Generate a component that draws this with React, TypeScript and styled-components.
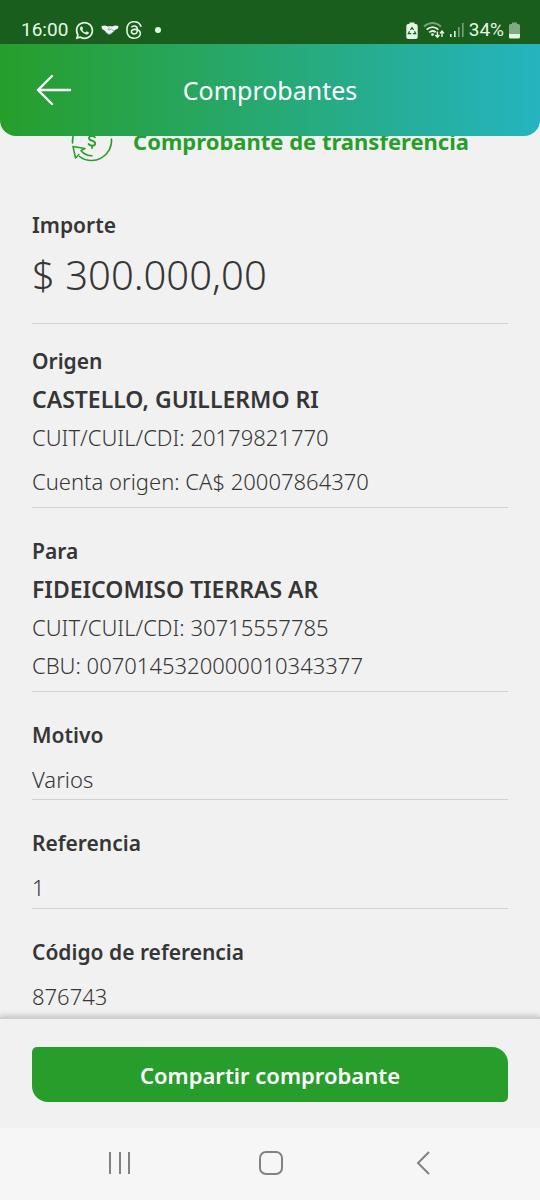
import React from "react";
import styled, { createGlobalStyle } from "styled-components";
import { RiWhatsappLine } from "react-icons/ri";
import { BsThreads } from "react-icons/bs";

const Global = createGlobalStyle`
  * { box-sizing: border-box; }
  body {
    margin: 0;
    background: #f1f1f1;
    color: #363636;
    font-family: "Noto Sans", "Open Sans", sans-serif;
  }
`;

const Screen = styled.div`
  display: flex;
  flex-direction: column;
  min-height: 100vh;
`;

const StatusBar = styled.div`
  display: flex;
  justify-content: space-between;
  align-items: center;
  height: 44px;
  padding: 16px 20px 0 21px;
  background: #195e1d;
  color: #e6f8e4;
  font: 400 19px/28px Roboto, sans-serif;
`;

const StatusGroup = styled.div<{ $gap: number }>`
  display: flex;
  align-items: center;
  gap: ${(p) => p.$gap}px;
`;

const Dot = styled.span`
  width: 6px;
  height: 6px;
  margin-left: 6px;
  border-radius: 50%;
  background: currentColor;
`;

const Header = styled.header`
  position: relative;
  z-index: 1;
  display: grid;
  grid-template-columns: 44px 1fr 44px;
  align-items: center;
  height: 92px;
  padding: 0 32px;
  border-radius: 0 0 16px 16px;
  background: linear-gradient(90deg, #279e2b, #27a973 50%, #25b4c0);
  color: #fff;
`;

const IconButton = styled.button`
  display: flex;
  align-items: center;
  justify-content: center;
  width: 44px;
  height: 44px;
  padding: 0;
  border: 0;
  background: none;
  color: inherit;
  cursor: pointer;
`;

const HeaderTitle = styled.h1`
  margin: 0;
  font-size: 25px;
  font-weight: 400;
  line-height: 36px;
  text-align: center;
`;

const Content = styled.main`
  flex: 1;
  margin-top: -16px;
  padding: 0 32px;
`;

const TitleRow = styled.div`
  display: flex;
  justify-content: center;
  align-items: center;
  gap: 20px;
  height: 42px;
  color: #279e2b;
`;

const Title = styled.h2`
  margin: 0;
  font-size: 22px;
  font-weight: 700;
  line-height: 32px;
`;

const Section = styled.section<{ $top: number; $bottom: number; $last?: boolean }>`
  padding: ${(p) => p.$top}px 0 ${(p) => p.$bottom}px;
  border-bottom: ${(p) => (p.$last ? 0 : 1)}px solid #d2d2d2;
`;

const Label = styled.h3`
  margin: 0;
  font-size: 21px;
  font-weight: 600;
  line-height: 38px;
`;

const Name = styled.p`
  margin: 0;
  font-size: 23px;
  font-weight: 600;
  line-height: 38px;
`;

const Line = styled.p<{ $spaced?: boolean }>`
  margin: ${(p) => (p.$spaced ? 6 : 0)}px 0 0;
  font-size: 22px;
  font-weight: 300;
  line-height: 38px;
`;

const Amount = styled.p`
  margin: 3px 0 0;
  font-size: 40px;
  font-weight: 300;
  line-height: 56px;
`;

const Footer = styled.footer`
  padding: 28px 32px 26px;
  border-top: 2px solid #cfcfcf;
  box-shadow: 0 -2px 5px rgba(0, 0, 0, 0.16);
`;

const ShareButton = styled.button`
  display: block;
  width: 100%;
  height: 55px;
  padding: 0;
  border: 0;
  border-radius: 5px 16px 5px 16px;
  background: #279e2b;
  color: #fff;
  font: 600 22px/36px "Noto Sans", "Open Sans", sans-serif;
  cursor: pointer;
`;

const NavBar = styled.nav`
  display: flex;
  justify-content: space-between;
  align-items: center;
  height: 72px;
  padding: 0 95px 2px 97px;
  background: #f6f6f6;
  color: #828282;
`;

const HandshakeIcon = () => (
  <svg width="18" height="10" viewBox="0 0 18 10">
    <path d="M0.500 1 4 0.500 7 1.500 9 1l2 .500 3-1L17.500 1 17 3.500l-3 1.500-3.500 3.500L8.500 9.500 6 8.500 3.500 5.500 1 4z" fill="#f2f4fa" />
    <path d="M9 2 7 4.500l2 .500 1.500-1 3 2.500M3.500 5.500 6 8.500 8.500 9.500l3-2" fill="none" stroke="#7e8f9c" strokeWidth=".8" />
  </svg>
);

const RecyclingBattery = () => (
  <svg width="12" height="17" viewBox="0 0 12 17">
    <path d="M3.5 0.5h5v1.5h1.2a2 2 0 0 1 2 2V15a2 2 0 0 1-2 2H2.3a2 2 0 0 1-2-2V4a2 2 0 0 1 2-2h1.2z" fill="currentColor" />
    <path d="M4.4 8 6 5.600 7.600 8M8.500 9.300 9.600 11.700H7M5.300 11.700H2.400L3.500 9.300" fill="none" stroke="#195e1d" strokeWidth="1.200" />
  </svg>
);

const WifiIcon = () => (
  <svg width="22" height="18" viewBox="0 0 22 18" fill="none" stroke="currentColor" strokeWidth="1.8">
    <path d="M1 5.500Q9.500-1.500 18 5.500" opacity=".45" />
    <path d="M3.600 8.600Q9.500 3.600 15.400 8.600" />
    <path d="M6.200 11.400Q9.500 8.700 12.600 11.200" />
    <circle cx="9.500" cy="13.600" r="1.400" fill="currentColor" stroke="none" />
    <path d="M14.400 10.500v5.500M12.400 14l2 2.300 2-2.300M19 16v-5.700M17 12.400l2-2.300 2 2.300" strokeWidth="1.400" />
  </svg>
);

const SignalIcon = () => (
  <svg width="14" height="16" viewBox="0 0 14 16" fill="currentColor">
    <rect x="0" y="12" width="1.600" height="3" />
    <rect x="4" y="9" width="1.600" height="6" />
    <rect x="8" y="5" width="1.600" height="10" opacity=".45" />
    <rect x="12" y="1" width="1.600" height="14" opacity=".45" />
  </svg>
);

const BatteryIcon = () => (
  <svg width="11" height="17" viewBox="0 0 11 17" fill="currentColor">
    <path d="M3 0.500h5V2h1.500A1.500 1.500 0 0 1 11 3.500V12H0V3.500A1.500 1.500 0 0 1 1.500 2H3z" opacity=".5" />
    <path d="M0 12h11v3a1.500 1.500 0 0 1-1.500 1.500h-8A1.500 1.500 0 0 1 0 15z" />
  </svg>
);

const BackArrow = () => (
  <svg width="36" height="32" viewBox="0 0 36 32" fill="none" stroke="currentColor" strokeWidth="2.400" strokeLinecap="round" strokeLinejoin="round">
    <path d="M34 16H2M16 2 2 16l14 14" />
  </svg>
);

const TransferIcon = () => (
  <svg width="42" height="42" viewBox="0 0 42 42" fill="none" stroke="currentColor" strokeWidth="1.500" strokeLinejoin="round" strokeLinecap="round">
    <path d="M40.500 19a20 20 0 0 1-32 17.500" />
    <path d="M1.500 23a20 20 0 0 1 32-17.500" />
    <path d="M8 34.500 4.500 38 2 26.500l12 2-4 2.200c3 3.400 6.500 5 11 5.100" />
    <path d="M34 7.500 37.500 4l2.500 11.500-12-2 4-2.200c-3-3.400-6.500-5-11-5.100" />
    <path d="M24 17.300c-.8-1.500-6-2-6 .9 0 3 6.200 2 6.200 5.200 0 3-5.600 2.700-6.600.6M21 13.400v2.400M21 26v2" strokeWidth="1.800" />
  </svg>
);

const App: React.FC = () => (
  <>
    <Global />
    <Screen>
      <StatusBar>
        <StatusGroup $gap={6}>
          <span>16:00</span>
          <RiWhatsappLine size={21} />
          <HandshakeIcon />
          <BsThreads size={18} />
          <Dot />
        </StatusGroup>
        <StatusGroup $gap={5}>
          <RecyclingBattery />
          <StatusGroup $gap={5}>
            <WifiIcon />
            <SignalIcon />
          </StatusGroup>
          <span>34%</span>
          <BatteryIcon />
        </StatusGroup>
      </StatusBar>

      <Header>
        <IconButton aria-label="Volver">
          <BackArrow />
        </IconButton>
        <HeaderTitle>Comprobantes</HeaderTitle>
      </Header>

      <Content>
        <TitleRow>
          <TransferIcon />
          <Title>Comprobante de transferencia</Title>
        </TitleRow>

        <Section $top={44} $bottom={20}>
          <Label>Importe</Label>
          <Amount>$ 300.000,00</Amount>
        </Section>

        <Section $top={18} $bottom={7}>
          <Label>Origen</Label>
          <Name>CASTELLO, GUILLERMO RI</Name>
          <Line>CUIT/CUIL/CDI: 20179821770</Line>
          <Line $spaced>Cuenta origen: CA$ 20007864370</Line>
        </Section>

        <Section $top={24} $bottom={7}>
          <Label>Para</Label>
          <Name>FIDEICOMISO TIERRAS AR</Name>
          <Line>CUIT/CUIL/CDI: 30715557785</Line>
          <Line>CBU: 0070145320000010343377</Line>
        </Section>

        <Section $top={24} $bottom={1}>
          <Label>Motivo</Label>
          <Line $spaced>Varios</Line>
        </Section>

        <Section $top={24} $bottom={2}>
          <Label>Referencia</Label>
          <Line $spaced>1</Line>
        </Section>

        <Section $top={24} $bottom={1} $last>
          <Label>Código de referencia</Label>
          <Line $spaced>876743</Line>
        </Section>
      </Content>

      <Footer>
        <ShareButton>Compartir comprobante</ShareButton>
      </Footer>

      <NavBar>
        <IconButton aria-label="Recientes">
          <svg width="24" height="24" viewBox="0 0 24 24" stroke="currentColor" strokeWidth="2">
            <path d="M3 1v22M13 1v22M22 1v22" />
          </svg>
        </IconButton>
        <IconButton aria-label="Inicio">
          <svg width="24" height="24" viewBox="0 0 24 24" fill="none" stroke="currentColor" strokeWidth="2">
            <rect x="1" y="1" width="22" height="22" rx="6" />
          </svg>
        </IconButton>
        <IconButton aria-label="Atrás">
          <svg width="14" height="24" viewBox="0 0 14 24" fill="none" stroke="currentColor" strokeWidth="2">
            <path d="M13 1 2 12l11 11" />
          </svg>
        </IconButton>
      </NavBar>
    </Screen>
  </>
);

export default App;
